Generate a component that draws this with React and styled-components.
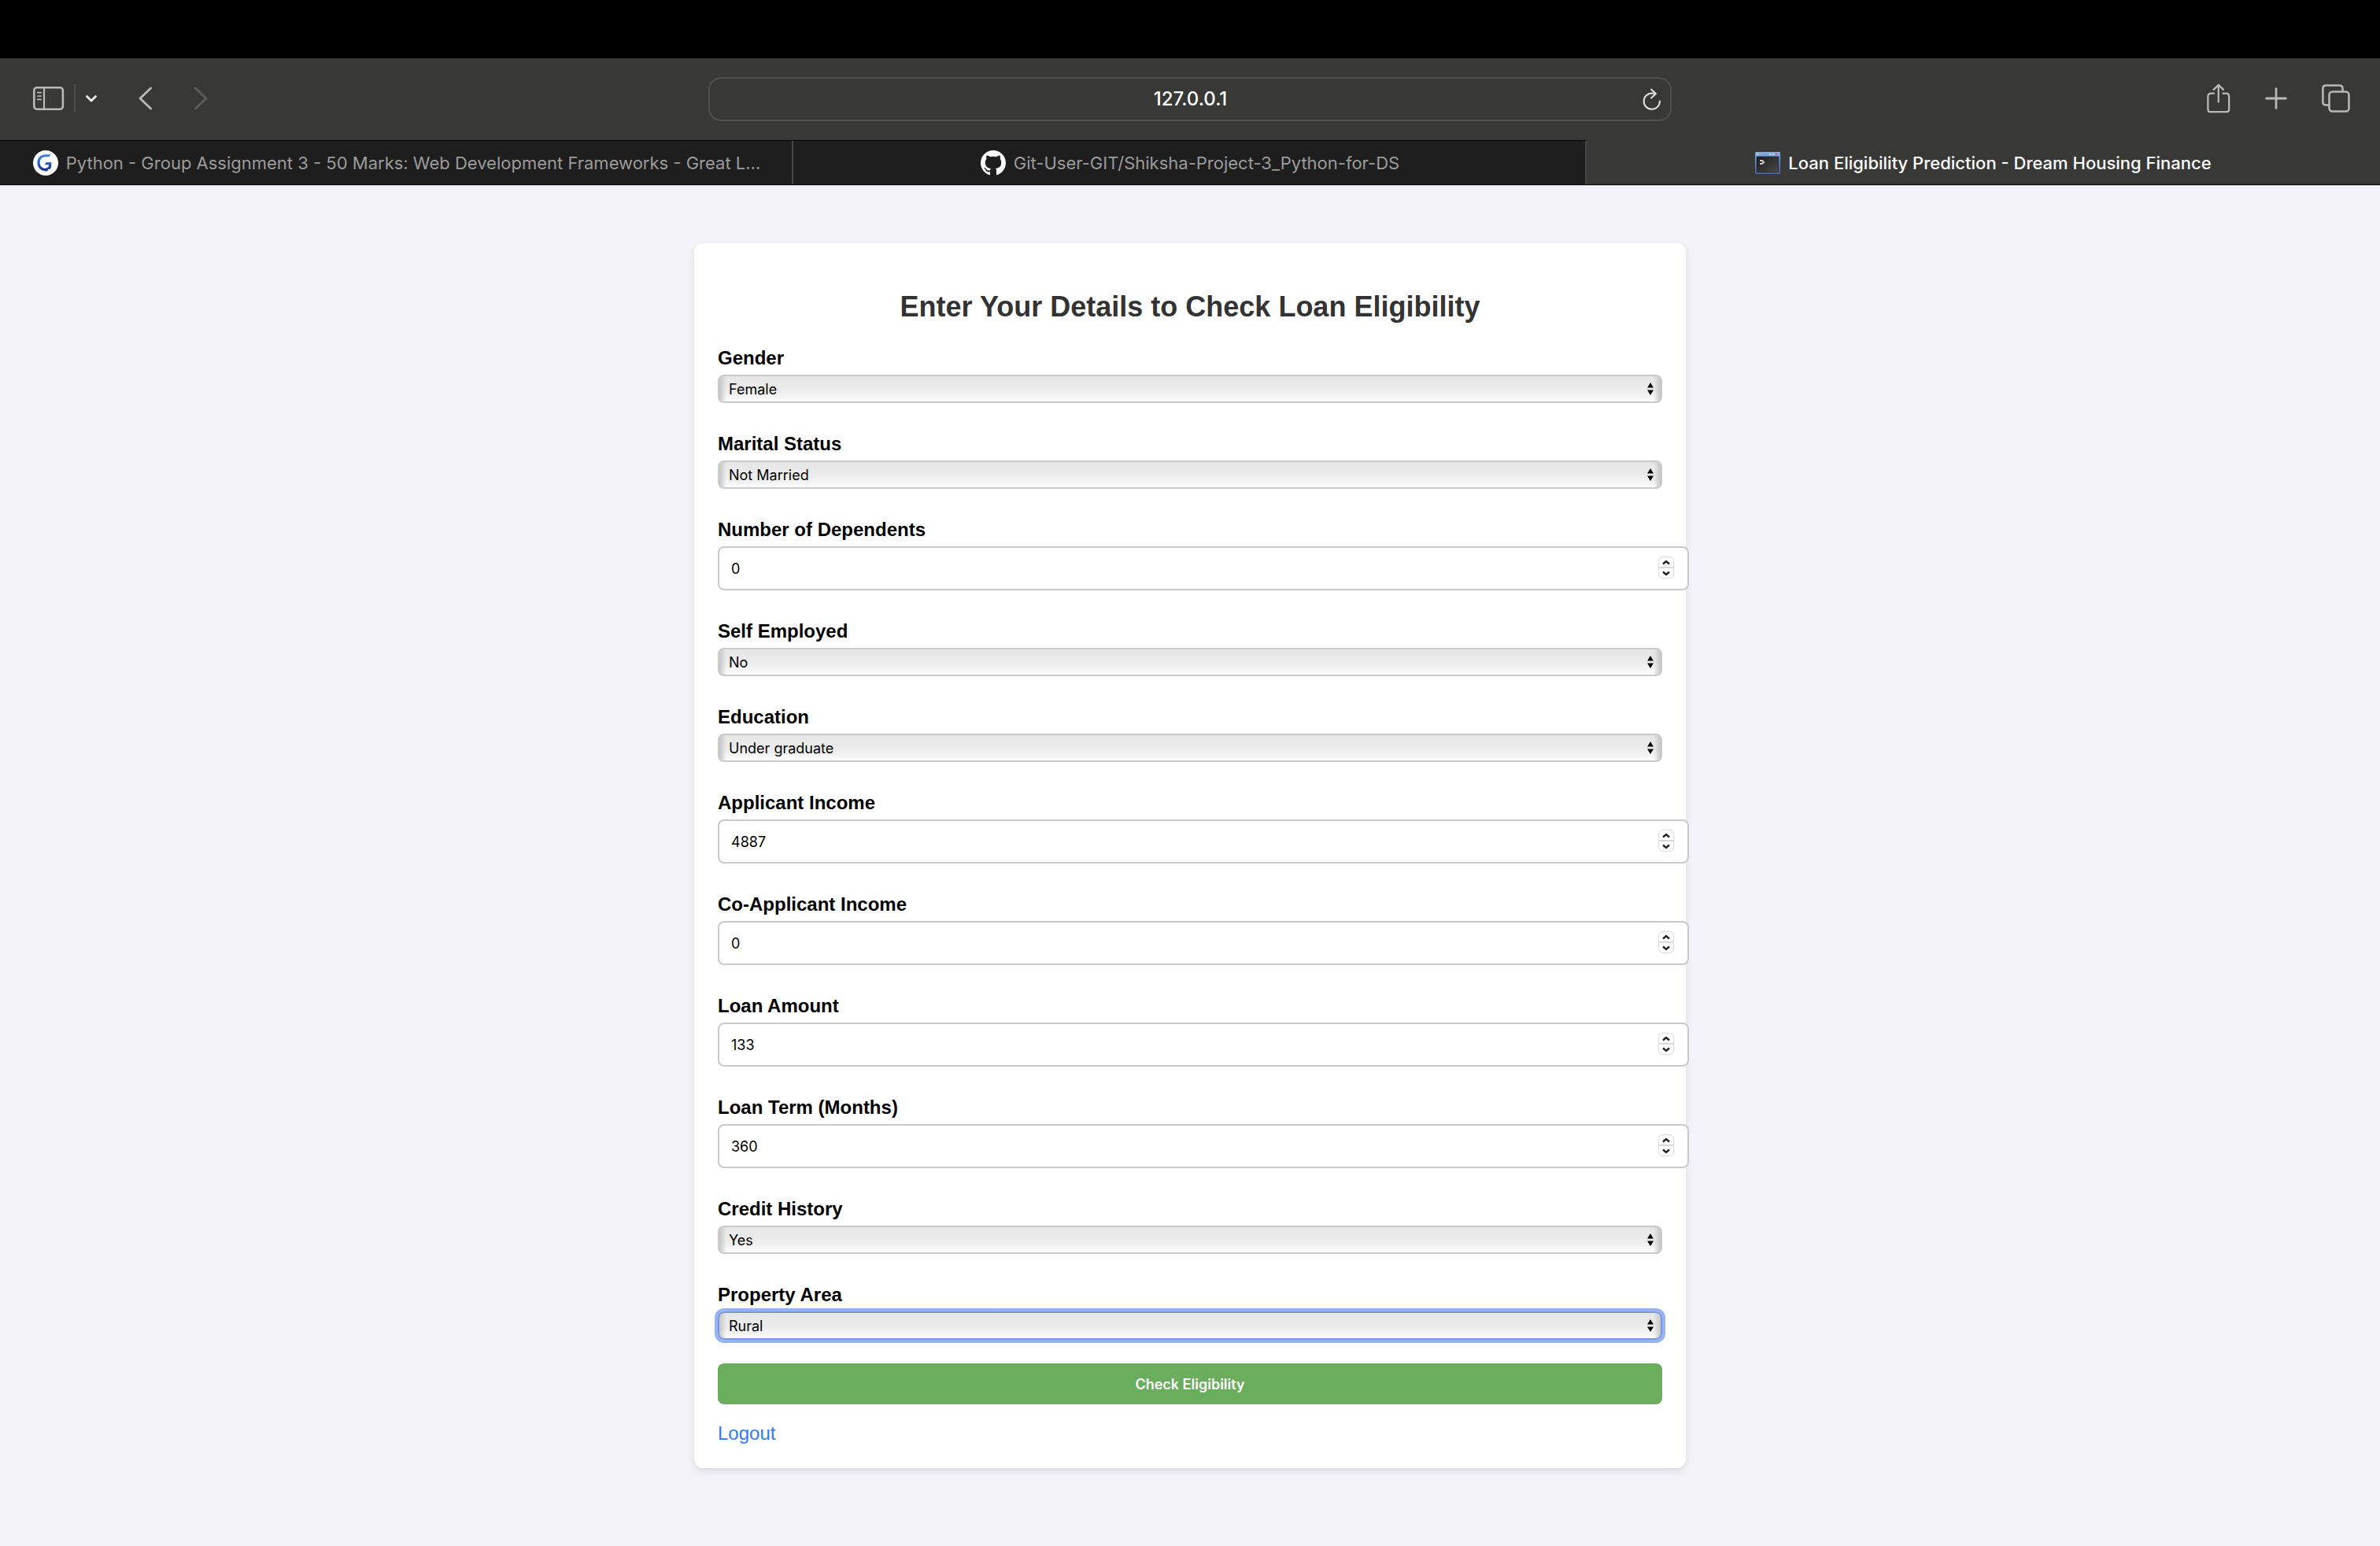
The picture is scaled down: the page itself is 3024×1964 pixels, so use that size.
import React, { useState } from "react";
import styled, { createGlobalStyle, css } from "styled-components";

const GlobalStyle = createGlobalStyle`
  *, *::before, *::after { box-sizing: border-box; }
  body {
    margin: 0;
    background: #f4f3f9;
    font-family: "Liberation Sans", Arial, sans-serif;
  }
  button, input, select { font-family: Inter, sans-serif; }
`;

const Window = styled.div`
  min-height: 100vh;
  display: flex;
  flex-direction: column;
`;

const Notch = styled.div`
  height: 74px;
  background: #000;
`;

const Toolbar = styled.header`
  height: 104px;
  display: grid;
  grid-template-columns: 1fr minmax(0, 1224px) 1fr;
  align-items: center;
  background: #383836;
`;

const ToolGroup = styled.div`
  display: flex;
  align-items: center;
  justify-content: ${(p) => (p.$end ? "flex-end" : "flex-start")};
  gap: ${(p) => p.$gap}px;
  padding: 0 38px 2px 42px;
`;

const ToolButton = styled.button`
  display: flex;
  align-items: center;
  justify-content: center;
  padding: 0;
  border: 0;
  background: none;
  color: ${(p) => p.$color || "#b9b9b8"};
  svg { display: block; }
`;

const SidebarTools = styled.div`
  display: flex;
  align-items: center;
  gap: 12px;
`;

const Divider = styled.span`
  width: 2px;
  height: 36px;
  background: #4c4c4a;
`;

const AddressBar = styled.form`
  height: 56px;
  display: flex;
  align-items: center;
  padding: 0 11px 0 36px;
  border: 2px solid #50504e;
  border-radius: 16px;
`;

const Address = styled.input`
  flex: 1;
  min-width: 0;
  border: 0;
  padding: 0;
  outline: none;
  background: none;
  color: #fff;
  font-size: 24px;
  font-weight: 500;
  line-height: 32px;
  text-align: center;
`;

const TabStrip = styled.nav`
  height: 58px;
  display: grid;
  grid-template-columns: repeat(3, 1fr);
  background: #383836;
  border-bottom: 1px solid #b4b4b6;
`;

const Tab = styled.button`
  min-width: 0;
  display: flex;
  align-items: center;
  justify-content: center;
  gap: 10px;
  padding: 0 40px;
  border: 0 solid #000;
  border-top-width: 1px;
  border-top-color: transparent;
  border-bottom-width: 1px;
  background: #383836;
  color: #fff;
  font-size: 22px;
  font-weight: 500;
  white-space: nowrap;
  svg { flex: none; }
  ${(p) =>
    !p.$active &&
    css`
      border-top-color: #000;
      background: #1e1e1e;
      box-shadow: inset -2px 0 #474745;
      color: #9b9b9b;
      font-weight: 400;
    `}
`;

const Page = styled.main`
  padding: 73px 24px;
`;

const Card = styled.section`
  max-width: 1260px;
  margin: 0 auto;
  padding: 60px 30px 31px;
  border-radius: 12px;
  background: #fff;
  box-shadow: 0 4px 10px rgba(0, 0, 0, 0.1);
`;

const Title = styled.h3`
  margin: 0 0 30px;
  color: #333;
  font-size: 36px;
  line-height: 42px;
  text-align: center;
`;

const Form = styled.form`
  display: flex;
  flex-direction: column;
  gap: 30px;
`;

const Fields = styled.div`
  display: flex;
  flex-direction: column;
  gap: 38px;
`;

const Field = styled.div`
  display: flex;
  flex-direction: column;
  align-items: flex-start;
  gap: 8px;
`;

const Label = styled.label`
  color: #000;
  font-size: 24px;
  font-weight: 700;
  line-height: 27px;
`;

const SelectBox = styled.div`
  position: relative;
  width: 100%;
  svg {
    position: absolute;
    top: 10px;
    right: 11px;
    pointer-events: none;
  }
`;

const Select = styled.select`
  appearance: none;
  display: block;
  width: 100%;
  height: 36px;
  padding: 0 30px 0 12px;
  border: 2px solid #cacaca;
  border-radius: 8px;
  background:
    linear-gradient(90deg, #c6c6c6, rgba(222, 222, 222, 0) 9px),
    linear-gradient(270deg, #c6c6c6, rgba(222, 222, 222, 0) 9px),
    linear-gradient(#e6e6e6, #ececec 55%, #fcfcfc);
  color: #000;
  font-size: 18px;
  outline: none;
  &:focus {
    border-color: #7b98dc;
    box-shadow: 0 0 0 4px #97b3f4;
  }
`;

const NumberBox = styled.div`
  display: flex;
  align-items: center;
  width: calc(100% + 34px);
  height: 56px;
  padding: 0 17px 2px 15px;
  border: 2px solid #cacaca;
  border-radius: 8px;
  background: #fff;
`;

const NumberInput = styled.input`
  appearance: textfield;
  flex: 1;
  min-width: 0;
  padding: 2px 0 0;
  border: 0;
  outline: none;
  background: none;
  color: #000;
  font-size: 18px;
  &::-webkit-inner-spin-button { appearance: none; margin: 0; }
`;

const Stepper = styled.div`
  display: flex;
  flex-direction: column;
  width: 20px;
  height: 28px;
  border: 1px solid #dedede;
  border-radius: 7px;
  box-shadow: 0 0 1px #bbb;
`;

const Step = styled.button`
  flex: 1;
  display: flex;
  align-items: center;
  justify-content: center;
  padding: 0;
  border: 0;
  background: none;
  & + & { border-top: 2px solid #d9d9d9; }
`;

const Submit = styled.button`
  height: 52px;
  border: 0;
  border-radius: 8px;
  background: #69ad5d;
  color: #fff;
  font-size: 18px;
  font-weight: 600;
`;

const Logout = styled.a`
  display: inline-block;
  margin-top: 23px;
  color: #3478f6;
  font-size: 24px;
  line-height: 27px;
  text-decoration: none;
`;

const line = { fill: "none", stroke: "currentColor", strokeLinecap: "round", strokeLinejoin: "round" };

const SidebarIcon = () => (
  <svg width="40" height="30" viewBox="0 0 40 30" {...line} strokeWidth="2.6">
    <rect x="1.3" y="1.3" width="36.6" height="27.4" rx="3.6" />
    <path d="M14 1.5v27" strokeWidth="2.2" />
    <path d="M5.8 7.6h4.4M5.8 12h4.4M5.8 16.4h4.4" strokeWidth="1.7" />
  </svg>
);
const ChevronDown = () => (
  <svg width="16" height="12" viewBox="0 0 16 12" {...line} strokeWidth="3">
    <path d="M2.5 3.5L8 9l5.5-5.5" />
  </svg>
);
const Back = () => (
  <svg width="18" height="30" viewBox="0 0 18 30" {...line} strokeWidth="2.8">
    <path d="M15.6 2L2 15l13.6 13" />
  </svg>
);
const Forward = () => (
  <svg width="18" height="30" viewBox="0 0 18 30" {...line} strokeWidth="2.8">
    <path d="M2.4 2L16 15 2.4 28" />
  </svg>
);
const Reload = () => (
  <svg width="24" height="28" viewBox="0 0 24 28" {...line} strokeWidth="2">
    <path d="M22 16.6A10.2 10.2 0 1 1 12 6.4q2.6 0 4.6.6" />
    <path d="M11 1.6L16.800 7 11 12.4" />
  </svg>
);
const Share = () => (
  <svg width="30" height="38" viewBox="0 0 30 38" {...line} strokeWidth="2.3">
    <path
      d="M10 12.6H5.200Q1.400 12.6 1.400 16.400V32.400Q1.400 36.200 5.200 36.200H24.400Q28.200 36.200 28.200 32.400V16.400Q28.200 12.6 24.400 12.6H19.600"
      strokeLinecap="butt"
    />
    <path d="M14.8 23.500V2M8.600 7.800L14.8 1.800 21 7.800" />
  </svg>
);
const Plus = () => (
  <svg width="28" height="28" viewBox="0 0 28 28" {...line} strokeWidth="2.8">
    <path d="M14 1.6v24.8M1.600 14h24.8" />
  </svg>
);
const TabsIcon = () => (
  <svg width="36" height="36" viewBox="0 0 36 36" {...line} strokeWidth="2.5">
    <rect x="9.5" y="9.5" width="25" height="25" rx="4" />
    <path d="M9 26.500H5.400Q1.400 26.500 1.400 22.500V5.400Q1.400 1.400 5.400 1.400H22.500Q26.500 1.400 26.500 5.400V9" />
  </svg>
);
const GreatLearningIcon = () => (
  <svg width="32" height="32" viewBox="0 0 32 32">
    <defs>
      <linearGradient id="gl" x1="0" y1="0" x2="0" y2="1">
        <stop offset="0" stopColor="#3a86dc" />
        <stop offset="1" stopColor="#1a2f9e" />
      </linearGradient>
    </defs>
    <circle cx="16" cy="16" r="16" fill="#fff" />
    <path
      fill="url(#gl)"
      d="M22.300 5.200L20.400 8.200H15.500C11.300 8.200 8.600 11.400 8.600 15.400C8.600 19.700 11.600 22.800 15.400 22.800C17.600 22.800 19.100 21.900 19.800 20.300V18.200H14.600L16.600 15.200H23.200V20.200C22.900 22 22.200 23.300 21.200 24.200L19.400 23.700L18.400 26.200C11.400 27.600 5.400 22.600 5.400 15.600C5.400 9.400 10 5.200 15.800 5.200Z"
    />
  </svg>
);
const GitHubIcon = () => (
  <svg width="32" height="32" viewBox="0 0 16 16" fill="#fff">
    <path d="M8 0C3.580 0 0 3.580 0 8c0 3.540 2.290 6.530 5.470 7.590.4.070.55-.17.55-.38 0-.19-.01-.82-.01-1.490-2.010.37-2.530-.49-2.690-.94-.09-.23-.48-.94-.82-1.130-.28-.15-.68-.52-.01-.53.63-.01 1.080.58 1.230.82.72 1.210 1.870.87 2.330.66.070-.52.280-.87.510-1.070-1.780-.2-3.640-.89-3.640-3.950 0-.87.310-1.590.82-2.150-.08-.2-.36-1.020.08-2.120 0 0 .67-.21 2.200.82.640-.18 1.320-.27 2-.27s1.360.09 2 .27c1.530-1.040 2.200-.82 2.200-.82.440 1.100.16 1.920.08 2.120.510.56.82 1.270.82 2.150 0 3.070-1.870 3.750-3.650 3.950.290.250.540.730.540 1.480 0 1.070-.010 1.930-.010 2.200 0 .210.150.460.550.380A8.010 8.010 0 0 0 16 8c0-4.420-3.580-8-8-8z" />
  </svg>
);
const TerminalIcon = () => (
  <svg width="32" height="28" viewBox="0 0 32 28">
    <defs>
      <linearGradient id="frame" x1="0" y1="0" x2="0" y2="1">
        <stop offset="0" stopColor="#86aee6" />
        <stop offset="1" stopColor="#5069a8" />
      </linearGradient>
      <linearGradient id="screen" x1="0" y1="0" x2="1" y2="1">
        <stop offset="0" stopColor="#1c1c1c" />
        <stop offset="1" stopColor="#4a4a4a" />
      </linearGradient>
    </defs>
    <rect width="32" height="28" rx="1" fill="url(#frame)" />
    <rect x="2" y="6" width="28" height="20" fill="url(#screen)" stroke="#1c2a44" strokeWidth="0.8" />
    <path d="M2 3h2M18 3h2M22 3h2" stroke="#d5dfec" strokeWidth="2" />
    <path d="M26 3h2" stroke="#e0524a" strokeWidth="2" />
    <path d="M6 11h3l2 2-2 2H6" fill="none" stroke="#ccc" strokeWidth="2" />
  </svg>
);
const SelectArrows = () => (
  <svg width="8" height="16" viewBox="0 0 8 16">
    <path d="M4 0L8 6.6H0zM4 16L0 9.600H8z" />
  </svg>
);
const StepChevron = ({ down }) => (
  <svg width="10" height="7" viewBox="0 0 10 7" fill="none" stroke="#222" strokeWidth="2.4">
    <path d={down ? "M1 1.5L5 5 9 1.5" : "M1 5.5L5 2 9 5.5"} />
  </svg>
);

const FIELDS = [
  { id: "gender", label: "Gender", options: ["Female", "Male"] },
  { id: "married", label: "Marital Status", options: ["Not Married", "Married"] },
  { id: "dependents", label: "Number of Dependents", value: 0 },
  { id: "self-employed", label: "Self Employed", options: ["No", "Yes"] },
  { id: "education", label: "Education", options: ["Under graduate", "Graduate"] },
  { id: "income", label: "Applicant Income", value: 4887 },
  { id: "co-income", label: "Co-Applicant Income", value: 0 },
  { id: "amount", label: "Loan Amount", value: 133 },
  { id: "term", label: "Loan Term (Months)", value: 360 },
  { id: "credit", label: "Credit History", options: ["Yes", "No"] },
  { id: "area", label: "Property Area", options: ["Rural", "Semiurban", "Urban"], focus: true },
];

function SelectField({ id, label, options, focus }) {
  return (
    <Field>
      <Label htmlFor={id}>{label}</Label>
      <SelectBox>
        <Select id={id} name={id} autoFocus={focus}>
          {options.map((o) => (
            <option key={o}>{o}</option>
          ))}
        </Select>
        <SelectArrows />
      </SelectBox>
    </Field>
  );
}

function NumberField({ id, label, value }) {
  const [amount, setAmount] = useState(value);
  return (
    <Field>
      <Label htmlFor={id}>{label}</Label>
      <NumberBox>
        <NumberInput id={id} name={id} type="number" value={amount} onChange={(e) => setAmount(e.target.value)} />
        <Stepper>
          <Step type="button" aria-label={`Increase ${label}`} onClick={() => setAmount(Number(amount) + 1)}>
            <StepChevron />
          </Step>
          <Step type="button" aria-label={`Decrease ${label}`} onClick={() => setAmount(Number(amount) - 1)}>
            <StepChevron down />
          </Step>
        </Stepper>
      </NumberBox>
    </Field>
  );
}

export default function App() {
  return (
    <Window>
      <GlobalStyle />
      <Notch />
      <Toolbar>
        <ToolGroup $gap={52}>
          <SidebarTools>
            <ToolButton aria-label="Sidebar"><SidebarIcon /></ToolButton>
            <Divider />
            <ToolButton aria-label="Tab groups" $color="#e6e6e6"><ChevronDown /></ToolButton>
          </SidebarTools>
          <ToolButton aria-label="Back"><Back /></ToolButton>
          <ToolButton aria-label="Forward" $color="#5c5c5a"><Forward /></ToolButton>
        </ToolGroup>
        <AddressBar onSubmit={(e) => e.preventDefault()}>
          <Address aria-label="Address" defaultValue="127.0.0.1" />
          <ToolButton type="button" aria-label="Reload" $color="#e0e0df"><Reload /></ToolButton>
        </AddressBar>
        <ToolGroup $end $gap={44}>
          <ToolButton aria-label="Share"><Share /></ToolButton>
          <ToolButton aria-label="New tab"><Plus /></ToolButton>
          <ToolButton aria-label="Show tabs"><TabsIcon /></ToolButton>
        </ToolGroup>
      </Toolbar>
      <TabStrip>
        <Tab>
          <GreatLearningIcon />
          Python - Group Assignment 3 - 50 Marks: Web Development Frameworks - Great L...
        </Tab>
        <Tab>
          <GitHubIcon />
          Git-User-GIT/Shiksha-Project-3_Python-for-DS
        </Tab>
        <Tab $active>
          <TerminalIcon />
          Loan Eligibility Prediction - Dream Housing Finance
        </Tab>
      </TabStrip>
      <Page>
        <Card>
          <Title>Enter Your Details to Check Loan Eligibility</Title>
          <Form onSubmit={(e) => e.preventDefault()}>
            <Fields>
              {FIELDS.map((f) => (f.options ? <SelectField key={f.id} {...f} /> : <NumberField key={f.id} {...f} />))}
            </Fields>
            <Submit type="submit">Check Eligibility</Submit>
          </Form>
          <Logout href="#logout">Logout</Logout>
        </Card>
      </Page>
    </Window>
  );
}
